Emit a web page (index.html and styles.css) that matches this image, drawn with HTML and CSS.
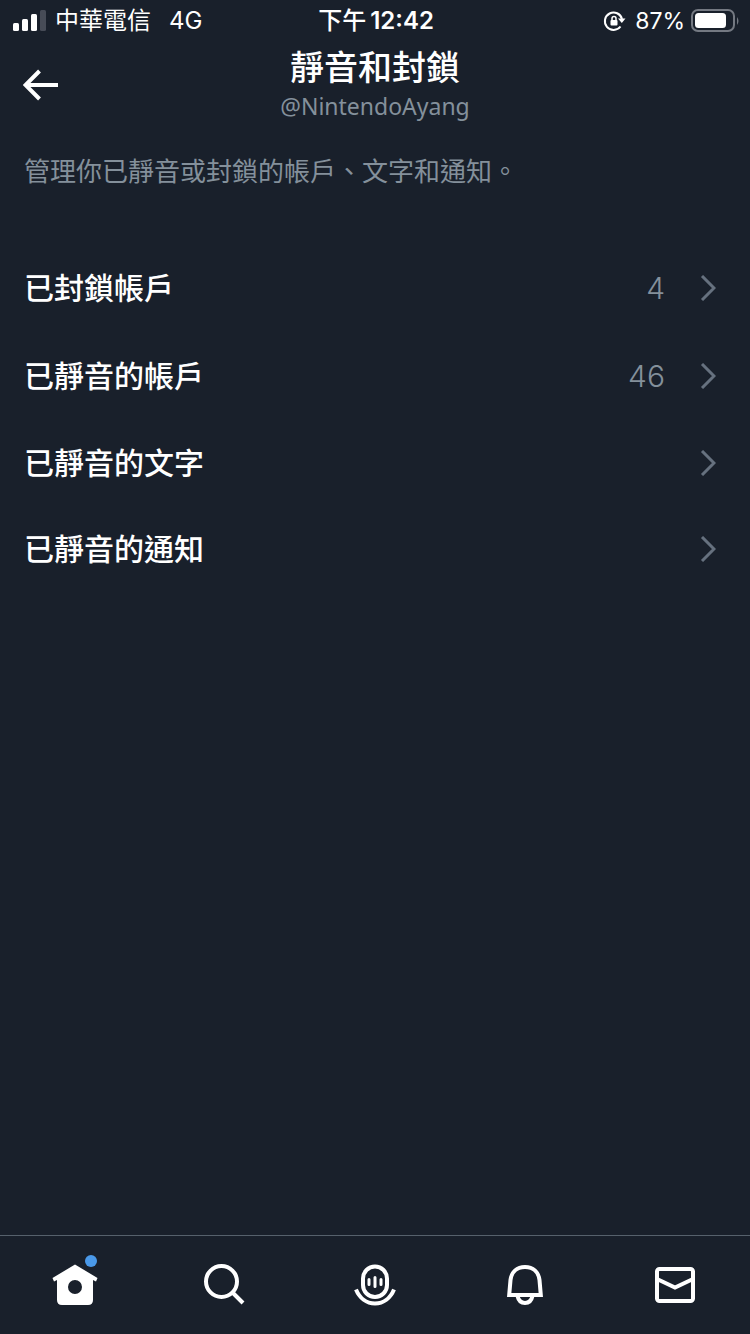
FILE: index.html
```html
<!DOCTYPE html>
<html lang="zh-Hant">
<head>
<meta charset="utf-8">
<meta name="viewport" content="width=device-width, initial-scale=1">
<title>靜音和封鎖</title>
<link rel="stylesheet" href="styles.css">
</head>
<body>
<div class="app">
  <div class="status">
    <div class="status-left">
      <svg class="signal" width="34" height="24" viewBox="0 0 34 24" aria-hidden="true">
        <rect x="0" y="14" width="6" height="8" rx="1.5"/>
        <rect x="9" y="10" width="6" height="12" rx="1.5"/>
        <rect x="18" y="5" width="6" height="17" rx="1.5"/>
        <rect class="dim" x="27" y="1" width="6" height="21" rx="1.5"/>
      </svg>
      <span class="carrier">中華電信</span>
      <span>4G</span>
    </div>
    <div class="clock"><span class="period">下午</span><span>12:42</span></div>
    <div class="status-right">
      <svg width="24" height="24" viewBox="0 0 24 24" aria-hidden="true">
        <path class="line" d="M17.500 17.500A8.700 8.700 0 1 1 19 10" stroke-width="2"/>
        <path class="fill" d="M15 9.500h7.500l-3.700 4.500z"/>
        <rect class="fill" x="7.500" y="11" width="7" height="5.500" rx="1"/>
        <path class="line" d="M9 11.500V9.500a2 2 0 0 1 4 0v2" stroke-width="1.500"/>
      </svg>
      <span class="percent">87%</span>
      <svg width="48" height="24" viewBox="0 0 48 24" aria-hidden="true">
        <rect class="shell" x="1" y="1" width="42" height="21" rx="6"/>
        <path class="cap" d="M46 8q3 4 0 8z"/>
        <rect class="fill" x="4" y="4" width="31" height="15" rx="3.500"/>
      </svg>
    </div>
  </div>

  <header class="header">
    <button class="back" type="button" aria-label="返回">
      <svg width="36" height="32" viewBox="0 0 36 32" aria-hidden="true">
        <path class="line" d="M35 16H3M16.500 2L2.500 16l14 14" stroke-width="4"/>
      </svg>
    </button>
    <div class="heading">
      <h1>靜音和封鎖</h1>
      <p class="handle">@NintendoAyang</p>
    </div>
  </header>

  <main class="main">
    <p class="intro">管理你已靜音或封鎖的帳戶、文字和通知。</p>
    <nav class="list" aria-label="靜音和封鎖">
      <a class="row tall" href="#blocked"><span class="label">已封鎖帳戶</span><span class="count">4</span><svg class="chevron" width="16" height="26" viewBox="0 0 16 26" aria-hidden="true"><path d="M2 1l12 12L2 25"/></svg></a>
      <a class="row tall" href="#muted"><span class="label">已靜音的帳戶</span><span class="count">46</span><svg class="chevron" width="16" height="26" viewBox="0 0 16 26" aria-hidden="true"><path d="M2 1l12 12L2 25"/></svg></a>
      <a class="row" href="#words"><span class="label">已靜音的文字</span><svg class="chevron" width="16" height="26" viewBox="0 0 16 26" aria-hidden="true"><path d="M2 1l12 12L2 25"/></svg></a>
      <a class="row" href="#notifications"><span class="label">已靜音的通知</span><svg class="chevron" width="16" height="26" viewBox="0 0 16 26" aria-hidden="true"><path d="M2 1l12 12L2 25"/></svg></a>
    </nav>
  </main>

  <nav class="tabs" aria-label="主選單">
    <a class="tab" href="#home" aria-label="首頁">
      <svg width="50" height="52" viewBox="0 0 50 52" aria-hidden="true">
        <path class="fill" fill-rule="evenodd" d="M25 10.500L47.500 24l-1.500 3.500L43 26v20q0 5-5 5H12q-5 0-5-5V26l-3 1.500L2.500 24zM25 26a7 7 0 1 0 0 14a7 7 0 0 0 0-14z"/>
        <circle class="dot" cx="41" cy="7" r="6"/>
      </svg>
    </a>
    <a class="tab" href="#search" aria-label="搜尋">
      <svg width="50" height="52" viewBox="0 0 50 52" aria-hidden="true">
        <circle class="line" cx="21.500" cy="27.500" r="15.500" stroke-width="4"/>
        <path class="line" d="M32.500 38.500L43 49" stroke-width="4"/>
      </svg>
    </a>
    <a class="tab" href="#spaces" aria-label="空間">
      <svg width="50" height="52" viewBox="0 0 50 52" aria-hidden="true">
        <rect class="line" x="13" y="12.500" width="24" height="30.500" rx="12" stroke-width="4"/>
        <path class="line" d="M6 35.500C9.500 44 16.500 49.500 25 49.500S40.500 44 44 35.500" stroke-width="4"/>
        <path class="line" d="M19 25.500v5M25 23.500v9M31 25.500v5" stroke-width="3" stroke-linecap="round"/>
      </svg>
    </a>
    <a class="tab" href="#alerts" aria-label="通知">
      <svg width="50" height="52" viewBox="0 0 50 52" aria-hidden="true">
        <path class="line" d="M9.200 41L10.500 26C11.500 18 17 13 25 13S38.500 18 39.500 26l1.300 15z" stroke-width="4"/>
        <path class="line" d="M17.500 42c1 4.500 4 7 7.500 7s6.500-2.500 7.500-7" stroke-width="4"/>
      </svg>
    </a>
    <a class="tab" href="#messages" aria-label="訊息">
      <svg width="50" height="52" viewBox="0 0 50 52" aria-hidden="true">
        <rect class="line" x="7" y="15" width="36" height="32" rx="2.500" stroke-width="4"/>
        <path class="line" d="M7 25l18 8.500L43 25" stroke-width="4"/>
      </svg>
    </a>
  </nav>
</div>
</body>
</html>
```

FILE: styles.css
```css
* {
  box-sizing: border-box;
}

body,
h1,
p {
  margin: 0;
}

body {
  background: #19202b;
  color: #fff;
  font-family: Inter, "Noto Sans CJK TC", sans-serif;
}

svg {
  display: block;
  flex: none;
}

a {
  color: inherit;
  text-decoration: none;
}

.fill {
  fill: #fff;
}

.line {
  fill: none;
  stroke: #fff;
}

.app {
  display: flex;
  flex-direction: column;
  min-height: 100vh;
}

.status {
  display: grid;
  grid-template-columns: 1fr auto 1fr;
  align-items: center;
  height: 41px;
  padding: 1px 11px 0 13px;
  font-size: 24px;
  line-height: 40px;
}

.status-left,
.status-right,
.clock {
  display: flex;
  align-items: center;
}

.status-right {
  justify-content: flex-end;
}

.status svg {
  margin-bottom: 1px;
}

.signal {
  fill: #fff;
}

.signal .dim {
  fill: #474c57;
}

.carrier {
  margin: 0 18px 0 8px;
  font-weight: 400;
}

.clock {
  gap: 4px;
  font-weight: 600;
}

.period {
  font-weight: 500;
}

.percent {
  margin: 0 6px 0 8px;
  font-size: 23px;
}

.shell {
  fill: none;
  stroke: #747982;
  stroke-width: 2;
}

.cap {
  fill: #747982;
}

.header {
  display: grid;
  grid-template-columns: 72px 1fr 72px;
  align-items: center;
  height: 87px;
}

.back {
  padding: 0 0 0 23px;
  border: 0;
  background: none;
}

.heading {
  padding-bottom: 1px;
  text-align: center;
}

h1 {
  font-size: 34px;
  font-weight: 500;
  line-height: 44px;
}

.handle {
  color: #84909b;
  font-family: "Noto Sans", sans-serif;
  font-size: 23px;
  line-height: 32px;
}

.main {
  flex: 1;
}

.intro {
  padding: 24px;
  color: #84909b;
  font-size: 26px;
  font-weight: 400;
  line-height: 40px;
}

.list {
  padding-top: 28px;
}

.row {
  display: flex;
  align-items: center;
  height: 86px;
  padding: 0 34px 0 24px;
  font-size: 30px;
}

.tall {
  height: 88px;
}

.label {
  flex: 1;
  padding-bottom: 4px;
  font-weight: 500;
}

.count {
  margin-right: 35px;
  color: #84909b;
  font-weight: 300;
}

.chevron {
  fill: none;
  stroke: #66717f;
  stroke-width: 3;
}

.tabs {
  display: grid;
  grid-template-columns: repeat(5, 1fr);
  height: 99px;
  border-top: 1px solid #56616c;
}

.tab {
  display: flex;
  justify-content: center;
  padding-top: 18px;
}

.dot {
  fill: #4a99e9;
}
```
